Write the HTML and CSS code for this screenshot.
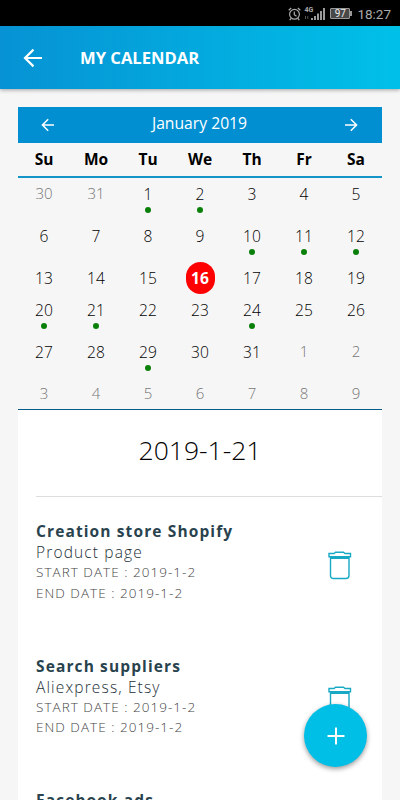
FILE: index.html
```
<!DOCTYPE html>
<html lang="en">
<head>
    <meta charset="UTF-8">
    <meta name="viewport" content="width=device-width, initial-scale=1.0">
    <link rel="stylesheet" href="styles.css">
    <title>My Calendar</title>
</head>
<body>
    <div class="status-bar">
        <svg class="alarm" width="13" height="14" viewBox="0 0 13 14" fill="none" stroke="#aaa" stroke-width="1.2">
            <circle cx="6.5" cy="7.3" r="4.9"/>
            <path d="M6.3 4.5v3.2l2.2 1.6M0.7 3.3L3.2 1M12.3 3.3L9.8 1M3 11.5l-1.3 1.6M10 11.5l1.3 1.6"/>
        </svg>
        <div class="network">
            <span class="network-type">4G</span>
            <svg width="21" height="14" viewBox="0 0 21 14">
                <path d="M1.5 9v3M3.8 9v3" stroke="#555" stroke-width="1"/>
                <path d="M8 11v2M11 9v4M14 6.500v6.500M17 4v9M20 1v12" stroke="#aaa" stroke-width="1.8"/>
            </svg>
        </div>
        <div class="battery"><span>97</span></div>
        <span class="time">18:27</span>
    </div>

    <header class="header">
        <svg width="20" height="20" viewBox="0 0 20 20" fill="none" stroke="#fff" stroke-width="2.2">
            <path d="M19 10H2.500M10.500 1.600L2 10l8.500 8.400"/>
        </svg>
        <h1>MY CALENDAR</h1>
    </header>

    <main class="container">
        <div class="month-bar">
            <svg width="14" height="14" viewBox="0 0 14 14" fill="none" stroke="#fff" stroke-width="1.5">
                <path d="M13 7H1.500M7.200 1.200L1.400 7l5.800 5.800"/>
            </svg>
            <span>January 2019</span>
            <svg width="14" height="14" viewBox="0 0 14 14" fill="none" stroke="#fff" stroke-width="1.5">
                <path d="M1 7h11.500M6.800 1.200L12.600 7l-5.800 5.800"/>
            </svg>
        </div>

        <div class="week-days">
            <span>Su</span><span>Mo</span><span>Tu</span><span>We</span><span>Th</span><span>Fr</span><span>Sa</span>
        </div>

        <div class="days">
            <div class="day other">30</div>
            <div class="day other">31</div>
            <div class="day event">1</div>
            <div class="day event">2</div>
            <div class="day">3</div>
            <div class="day">4</div>
            <div class="day">5</div>

            <div class="day">6</div>
            <div class="day">7</div>
            <div class="day">8</div>
            <div class="day">9</div>
            <div class="day event">10</div>
            <div class="day event">11</div>
            <div class="day event">12</div>

            <div class="day">13</div>
            <div class="day">14</div>
            <div class="day">15</div>
            <div class="day today"><span>16</span></div>
            <div class="day">17</div>
            <div class="day">18</div>
            <div class="day">19</div>

            <div class="day event">20</div>
            <div class="day event">21</div>
            <div class="day">22</div>
            <div class="day">23</div>
            <div class="day event">24</div>
            <div class="day">25</div>
            <div class="day">26</div>

            <div class="day">27</div>
            <div class="day">28</div>
            <div class="day event">29</div>
            <div class="day">30</div>
            <div class="day">31</div>
            <div class="day other">1</div>
            <div class="day other">2</div>

            <div class="day other">3</div>
            <div class="day other">4</div>
            <div class="day other">5</div>
            <div class="day other">6</div>
            <div class="day other">7</div>
            <div class="day other">8</div>
            <div class="day other">9</div>
        </div>

        <section class="tasks">
            <h2>2019-1-21</h2>
            <div class="task">
                <div class="task-text">
                    <h3>Creation store Shopify</h3>
                    <p class="subtitle">Product page</p>
                    <p class="date">START DATE : 2019-1-2</p>
                    <p class="date">END DATE : 2019-1-2</p>
                </div>
                <svg class="trash" width="24" height="30" viewBox="0 0 24 30">
                    <path d="M1 3.500h5l1.500-1.200h8l1.500 1.200H22.500v3.200H1zM2.500 8.200v17q0 3.300 3 3.300h12.500q3 0 3-3.300v-17z"/>
                </svg>
            </div>
            <div class="task">
                <div class="task-text">
                    <h3>Search suppliers</h3>
                    <p class="subtitle">Aliexpress, Etsy</p>
                    <p class="date">START DATE : 2019-1-2</p>
                    <p class="date">END DATE : 2019-1-2</p>
                </div>
                <svg class="trash" width="24" height="30" viewBox="0 0 24 30">
                    <path d="M1 3.500h5l1.500-1.200h8l1.500 1.200H22.500v3.200H1zM2.500 8.200v17q0 3.300 3 3.300h12.500q3 0 3-3.300v-17z"/>
                </svg>
            </div>
            <div class="task">
                <div class="task-text">
                    <h3>Facebook ads</h3>
                </div>
            </div>
        </section>
    </main>

    <button class="add" aria-label="Add">
        <svg width="18" height="18" viewBox="0 0 18 18" stroke="#fff" stroke-width="2">
            <path d="M9 0.500v17M0.500 9h17"/>
        </svg>
    </button>
</body>
</html>
```

FILE: styles.css
```
* {
    box-sizing: border-box;
}

body {
    margin: 0;
    height: 800px;
    overflow: hidden;
    display: flex;
    flex-direction: column;
    font-family: "Open Sans", sans-serif;
    background-color: #f6f6f6;
    color: #000;
}

h1, h2, h3, p {
    margin: 0;
}

.status-bar {
    flex: none;
    height: 26px;
    padding: 1px 9px 0 0;
    display: flex;
    justify-content: flex-end;
    align-items: center;
    background-color: #000;
    color: #aaa;
    font-family: Roboto, sans-serif;
}

.alarm {
    margin-right: 3px;
}

.network {
    position: relative;
    display: flex;
}

.network-type {
    position: absolute;
    left: 0;
    top: -1px;
    font-size: 7px;
    line-height: 8px;
    font-weight: bold;
}

.battery {
    position: relative;
    width: 20px;
    height: 11px;
    margin: 0 7px 0 5px;
    border: 1px solid #999;
    background-color: #484848;
    color: #eee;
    font-size: 10px;
    line-height: 9px;
    text-align: center;
    border-radius: 1px;
}

.battery::after {
    content: "";
    position: absolute;
    right: -3px;
    top: 2px;
    width: 2px;
    height: 5px;
    background-color: #999;
}

.time {
    font-size: 13.5px;
    line-height: 16px;
}

.header {
    flex: none;
    height: 63px;
    padding-left: 23px;
    display: flex;
    align-items: center;
    background: linear-gradient(to right, #0692d4, #00c0e8);
    box-shadow: 0 1px 4px rgba(0, 0, 0, 0.35);
}

.header h1 {
    margin-left: 37px;
    color: #fff;
    font-size: 16.6px;
    line-height: 22px;
}

.container {
    flex: none;
    margin: 18px 18px 0;
}

.month-bar {
    height: 36px;
    padding: 0 24px 0 23px;
    display: flex;
    justify-content: space-between;
    align-items: center;
    background-color: #028fd2;
    color: #fff;
}

.month-bar span {
    font-size: 15.7px;
    line-height: 22px;
    padding-bottom: 4px;
}

.week-days {
    height: 35px;
    display: grid;
    grid-template-columns: repeat(7, 1fr);
    text-align: center;
    font-size: 15.5px;
    font-weight: bold;
    line-height: 33px;
    border-bottom: 2px solid #1594c8;
}

.days {
    padding-top: 2px;
    height: 232px;
    display: grid;
    grid-template-columns: repeat(7, 1fr);
    grid-template-rows: 42px 42px 32px 42px 42px 28px;
    border-bottom: 1px solid #075b89;
}

.day {
    padding-top: 3px;
    text-align: center;
    font-size: 15.6px;
    font-weight: 350;
    line-height: 22px;
}

.other {
    padding-top: 2px;
    color: #777;
    font-size: 15px;
    font-weight: 300;
}

.event::after {
    content: "";
    display: block;
    width: 6px;
    height: 6px;
    margin: 1.5px auto 0;
    border-radius: 50%;
    background-color: #0a800a;
}

.today {
    padding-top: 0;
}

.today span {
    display: block;
    width: 29px;
    height: 32px;
    margin: -2px auto 0;
    border-radius: 15px;
    background-color: #f00;
    color: #fff;
    font-weight: bold;
    line-height: 32px;
}

.tasks {
    padding-left: 18px;
    background-color: #fff;
}

.tasks h2 {
    height: 87px;
    padding: 21px 18px 0 0;
    border-bottom: 1px solid #ddd;
    font-size: 26.5px;
    font-weight: 350;
    line-height: 38px;
    text-align: center;
}

.task {
    height: 134.5px;
    padding: 23px 30px 0 0;
    display: flex;
    justify-content: space-between;
}

.task h3 {
    color: #29434e;
    font-size: 15.5px;
    line-height: 22px;
    letter-spacing: 1.12px;
}

.subtitle {
    color: #1c3038;
    font-size: 15.5px;
    font-weight: 350;
    line-height: 20px;
    letter-spacing: 1.15px;
}

.date {
    color: #444;
    font-size: 13.5px;
    font-weight: 300;
    line-height: 20.5px;
    letter-spacing: 1.03px;
}

.trash {
    margin-top: 30px;
    fill: none;
    stroke: #18a9c4;
    stroke-width: 1.4;
}

.add {
    position: fixed;
    right: 33px;
    bottom: 33px;
    width: 63px;
    height: 63px;
    padding: 0;
    display: flex;
    align-items: center;
    justify-content: center;
    border: none;
    border-radius: 50%;
    background-color: #00bfe6;
    box-shadow: 0 2px 5px rgba(0, 0, 0, 0.4);
}
```
